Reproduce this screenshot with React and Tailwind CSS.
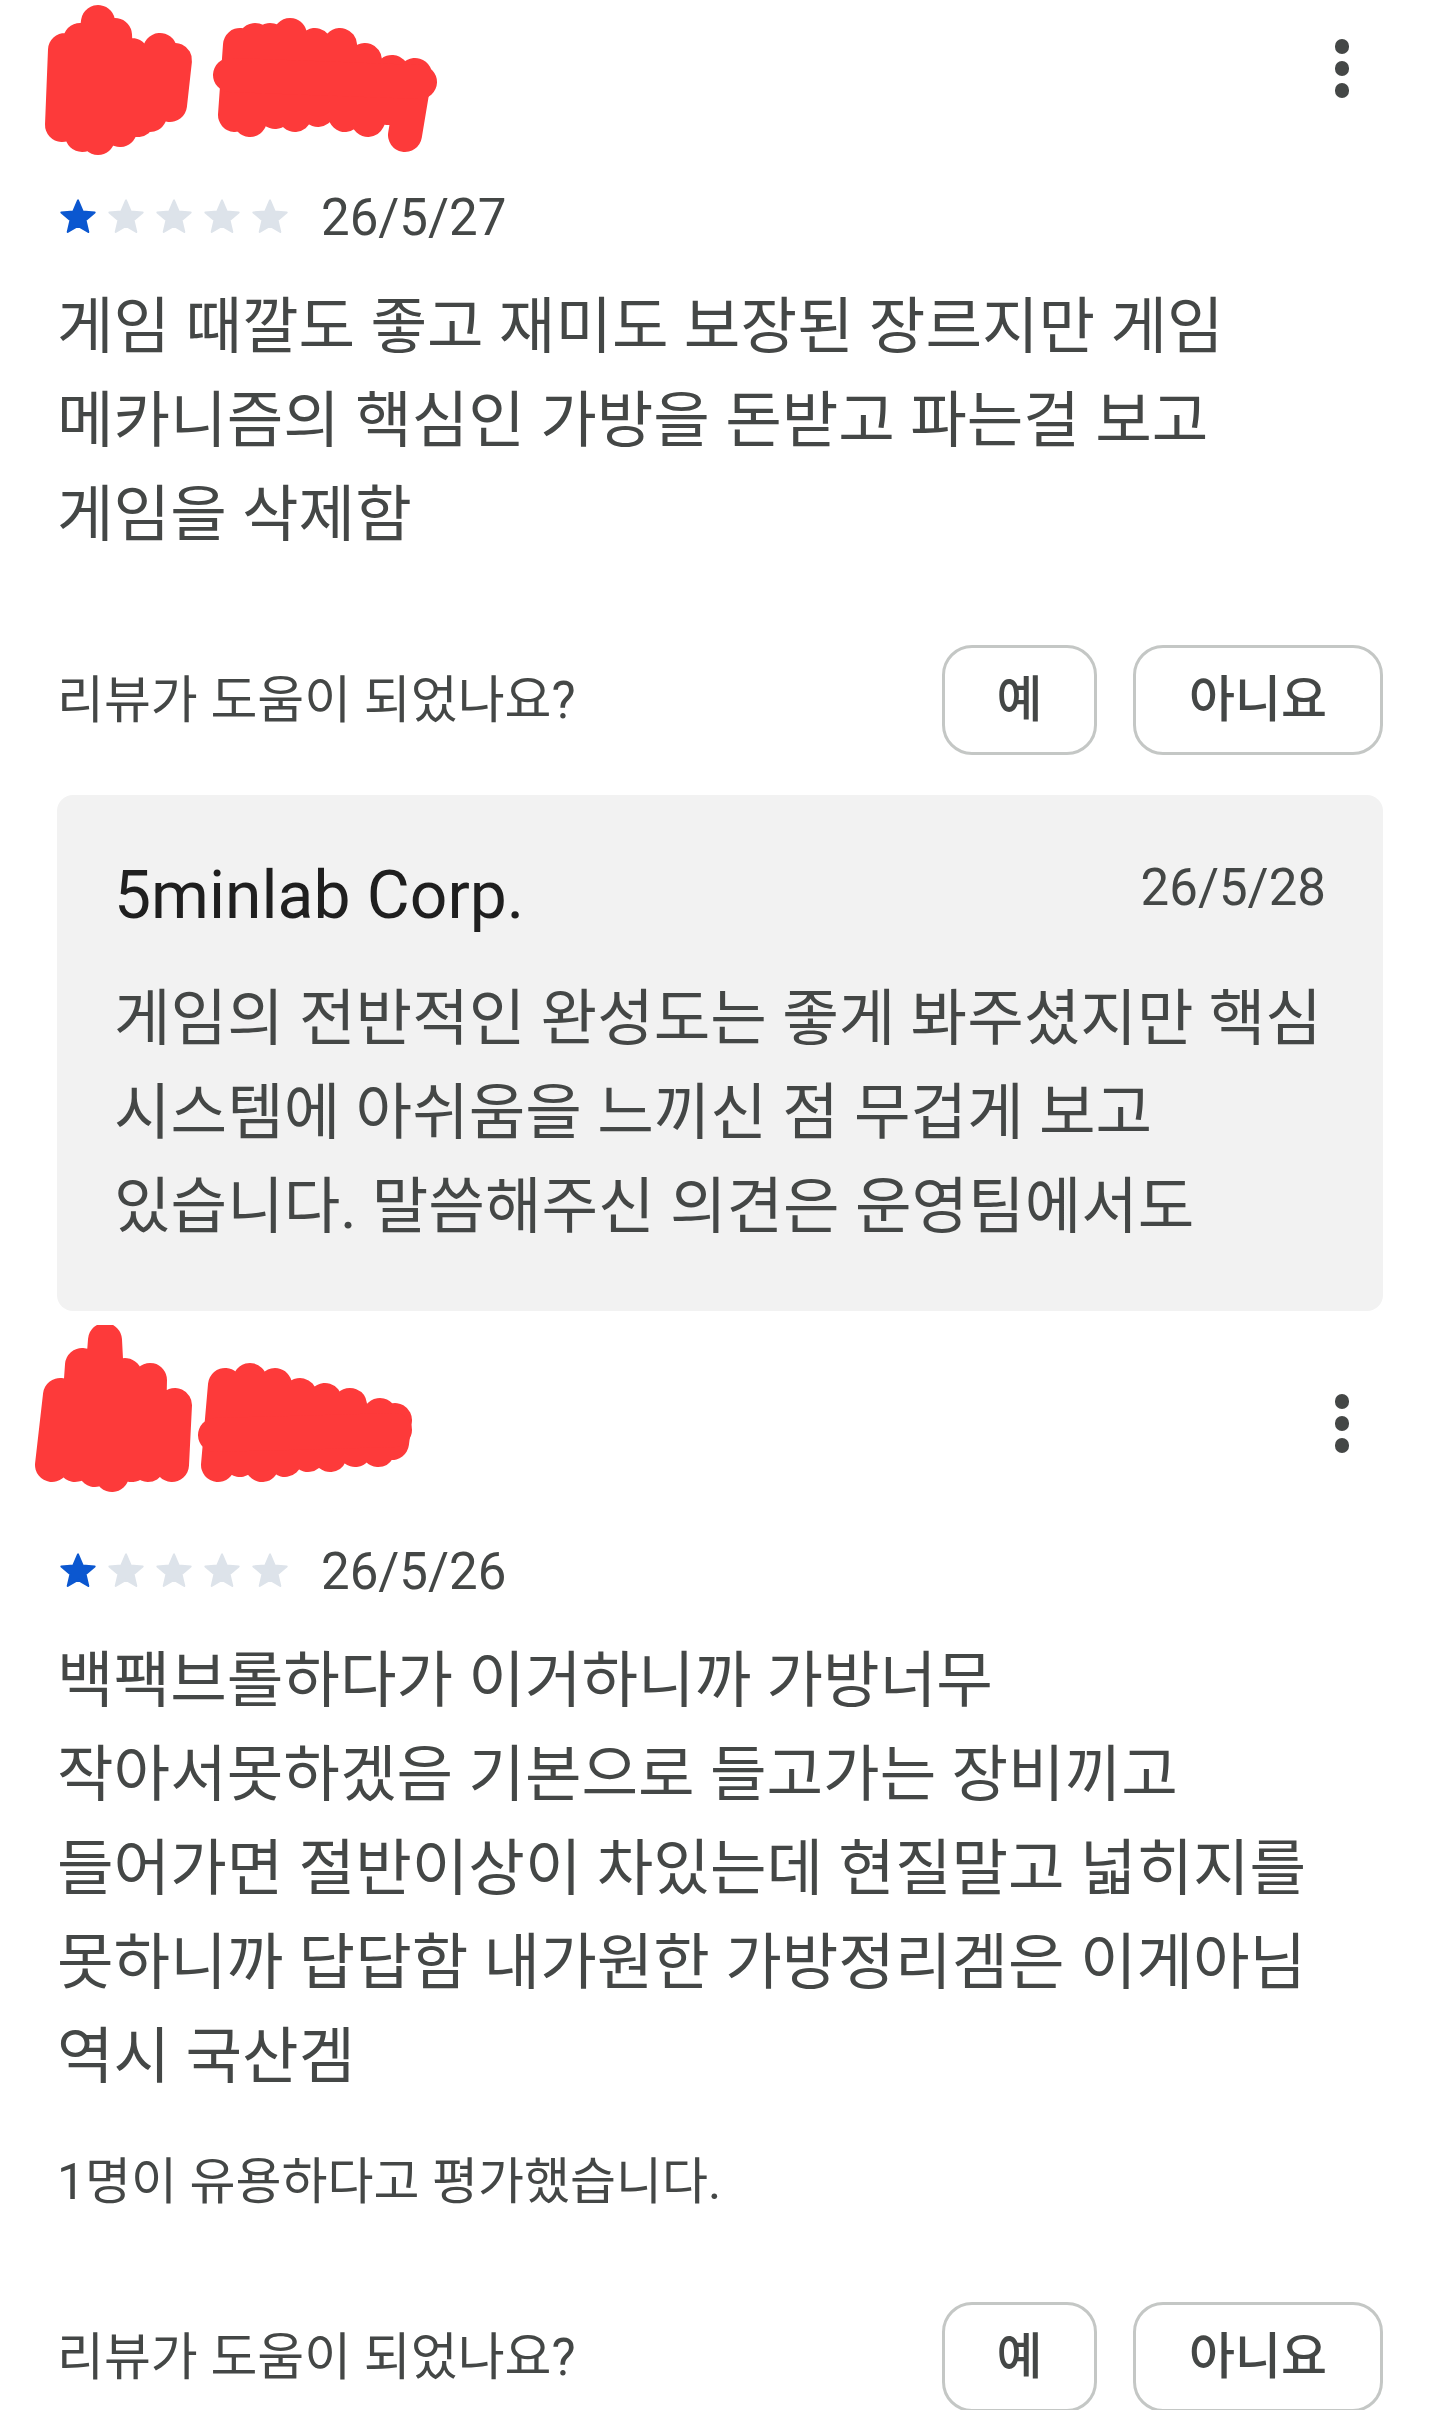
import React from "react";

const FONT = { fontFamily: "Roboto, 'Noto Sans CJK KR', sans-serif" };

function Star({ filled }) {
  const c = filled ? "#0b57d0" : "#dde3ea";
  return (
    <svg width="42" height="40" viewBox="0 0 24 24">
      <path
        d="M12 17.27L18.18 21l-1.64-7.03L22 9.24l-7.19-.61L12 2 9.19 8.63 2 9.24l5.46 4.73L5.82 21z"
        fill={c}
        stroke={c}
        strokeWidth="1.2"
        strokeLinejoin="round"
      />
    </svg>
  );
}

function Stars({ n }) {
  return (
    <div className="flex items-center gap-[6px]">
      {[0, 1, 2, 3, 4].map((i) => (
        <Star key={i} filled={i < n} />
      ))}
    </div>
  );
}

function Dots() {
  return (
    <div className="flex flex-col items-center gap-[7px] mr-[34px]">
      <div className="w-[14px] h-[15px] rounded-full bg-[#444746]" />
      <div className="w-[14px] h-[15px] rounded-full bg-[#444746]" />
      <div className="w-[14px] h-[15px] rounded-full bg-[#444746]" />
    </div>
  );
}

function Scribble1() {
  return (
    <svg width="460" height="160" viewBox="0 0 460 160" className="absolute left-[-57px] top-[0px]">
      <g fill="none" stroke="#fd3a3a" strokeWidth="34" strokeLinecap="round" strokeLinejoin="round">
        <polyline points="65,50 62,125 80,40 82,135 98,22 98,138 115,35 120,130 132,55 138,120 160,50 150,115 175,60 170,105" />
        <polyline points="240,45 235,115 255,40 250,120 270,40 275,112 290,35 295,115 315,45 318,110 340,45 345,115 365,60 368,120 392,72 388,108 415,75 405,135" />
        <polyline points="230,75 420,82" />
      </g>
    </svg>
  );
}

function Scribble2() {
  return (
    <svg width="420" height="170" viewBox="0 0 420 170" className="absolute left-[-57px] top-[-30px]">
      <g fill="none" stroke="#fd3a3a" strokeWidth="34" strokeLinecap="round" strokeLinejoin="round">
        <polyline points="52,140 60,70 75,140 82,40 95,145 105,15 112,150 125,50 132,140 150,55 148,140 175,80 172,140" />
        <polyline points="218,140 225,60 240,135 250,55 262,140 275,60 285,135 300,70 308,130 325,75 330,130 350,80 355,125 380,90 378,125 395,95 392,118" />
        <polyline points="215,110 395,105" />
      </g>
    </svg>
  );
}

function Helpful() {
  return (
    <div className="flex items-center justify-between">
      <span className="text-[51px] leading-none text-[#444746]">리뷰가 도움이 되었나요?</span>
      <div className="flex gap-[36px]">
        <button className="w-[155px] h-[110px] rounded-[30px] border-[3px] border-[#c4c7c5] text-[50px] font-medium text-[#444746] flex items-center justify-center">
          예
        </button>
        <button className="w-[250px] h-[110px] rounded-[30px] border-[3px] border-[#c4c7c5] text-[50px] font-medium text-[#444746] flex items-center justify-center">
          아니요
        </button>
      </div>
    </div>
  );
}

export default function App() {
  return (
    <div className="w-[1440px] h-[2410px] overflow-hidden bg-white px-[57px]" style={FONT}>
      {/* Card 1 */}
      <div className="relative h-[136px] flex items-center justify-end">
        <Scribble1 />
        <Dots />
      </div>
      <div className="mt-[56px] h-[50px] flex items-center gap-[30px]">
        <Stars n={1} />
        <span className="text-[51px] leading-none text-[#444746]">26/5/27</span>
      </div>
      <p className="mt-[38px] text-[61.5px] leading-[94px] text-[#444746]">
        게임 때깔도 좋고 재미도 보장된 장르지만 게임
        <br />
        메카니즘의 핵심인 가방을 돈받고 파는걸 보고
        <br />
        게임을 삭제함
      </p>
      <div className="mt-[83px]">
        <Helpful />
      </div>
      <div className="mt-[40px] h-[516px] rounded-[16px] bg-[#f2f2f2] px-[57px] pt-[61px]">
        <div className="h-[80px] flex items-center justify-between">
          <span className="text-[66px] leading-none text-[#1f1f1f]">5minlab Corp.</span>
          <span className="text-[51px] leading-none text-[#444746] -mt-[18px]">26/5/28</span>
        </div>
        <p className="mt-[36px] text-[61.5px] leading-[94px] text-[#444746]">
          게임의 전반적인 완성도는 좋게 봐주셨지만 핵심
          <br />
          시스템에 아쉬움을 느끼신 점 무겁게 보고
          <br />
          있습니다. 말씀해주신 의견은 운영팀에서도
        </p>
      </div>

      {/* Card 2 */}
      <div className="relative mt-[44px] h-[136px] flex items-center justify-end">
        <Scribble2 />
        <Dots />
      </div>
      <div className="mt-[55px] h-[50px] flex items-center gap-[30px]">
        <Stars n={1} />
        <span className="text-[51px] leading-none text-[#444746]">26/5/26</span>
      </div>
      <p className="mt-[38px] text-[61.5px] leading-[94px] text-[#444746]">
        백팩브롤하다가 이거하니까 가방너무
        <br />
        작아서못하겠음 기본으로 들고가는 장비끼고
        <br />
        들어가면 절반이상이 차있는데 현질말고 넓히지를
        <br />
        못하니까 답답함 내가원한 가방정리겜은 이게아님
        <br />
        역시 국산겜
      </p>
      <p className="mt-[48px] text-[50px] leading-[60px] text-[#444746]">1명이 유용하다고 평가했습니다.</p>
      <div className="mt-[90px]">
        <Helpful />
      </div>
    </div>
  );
}
